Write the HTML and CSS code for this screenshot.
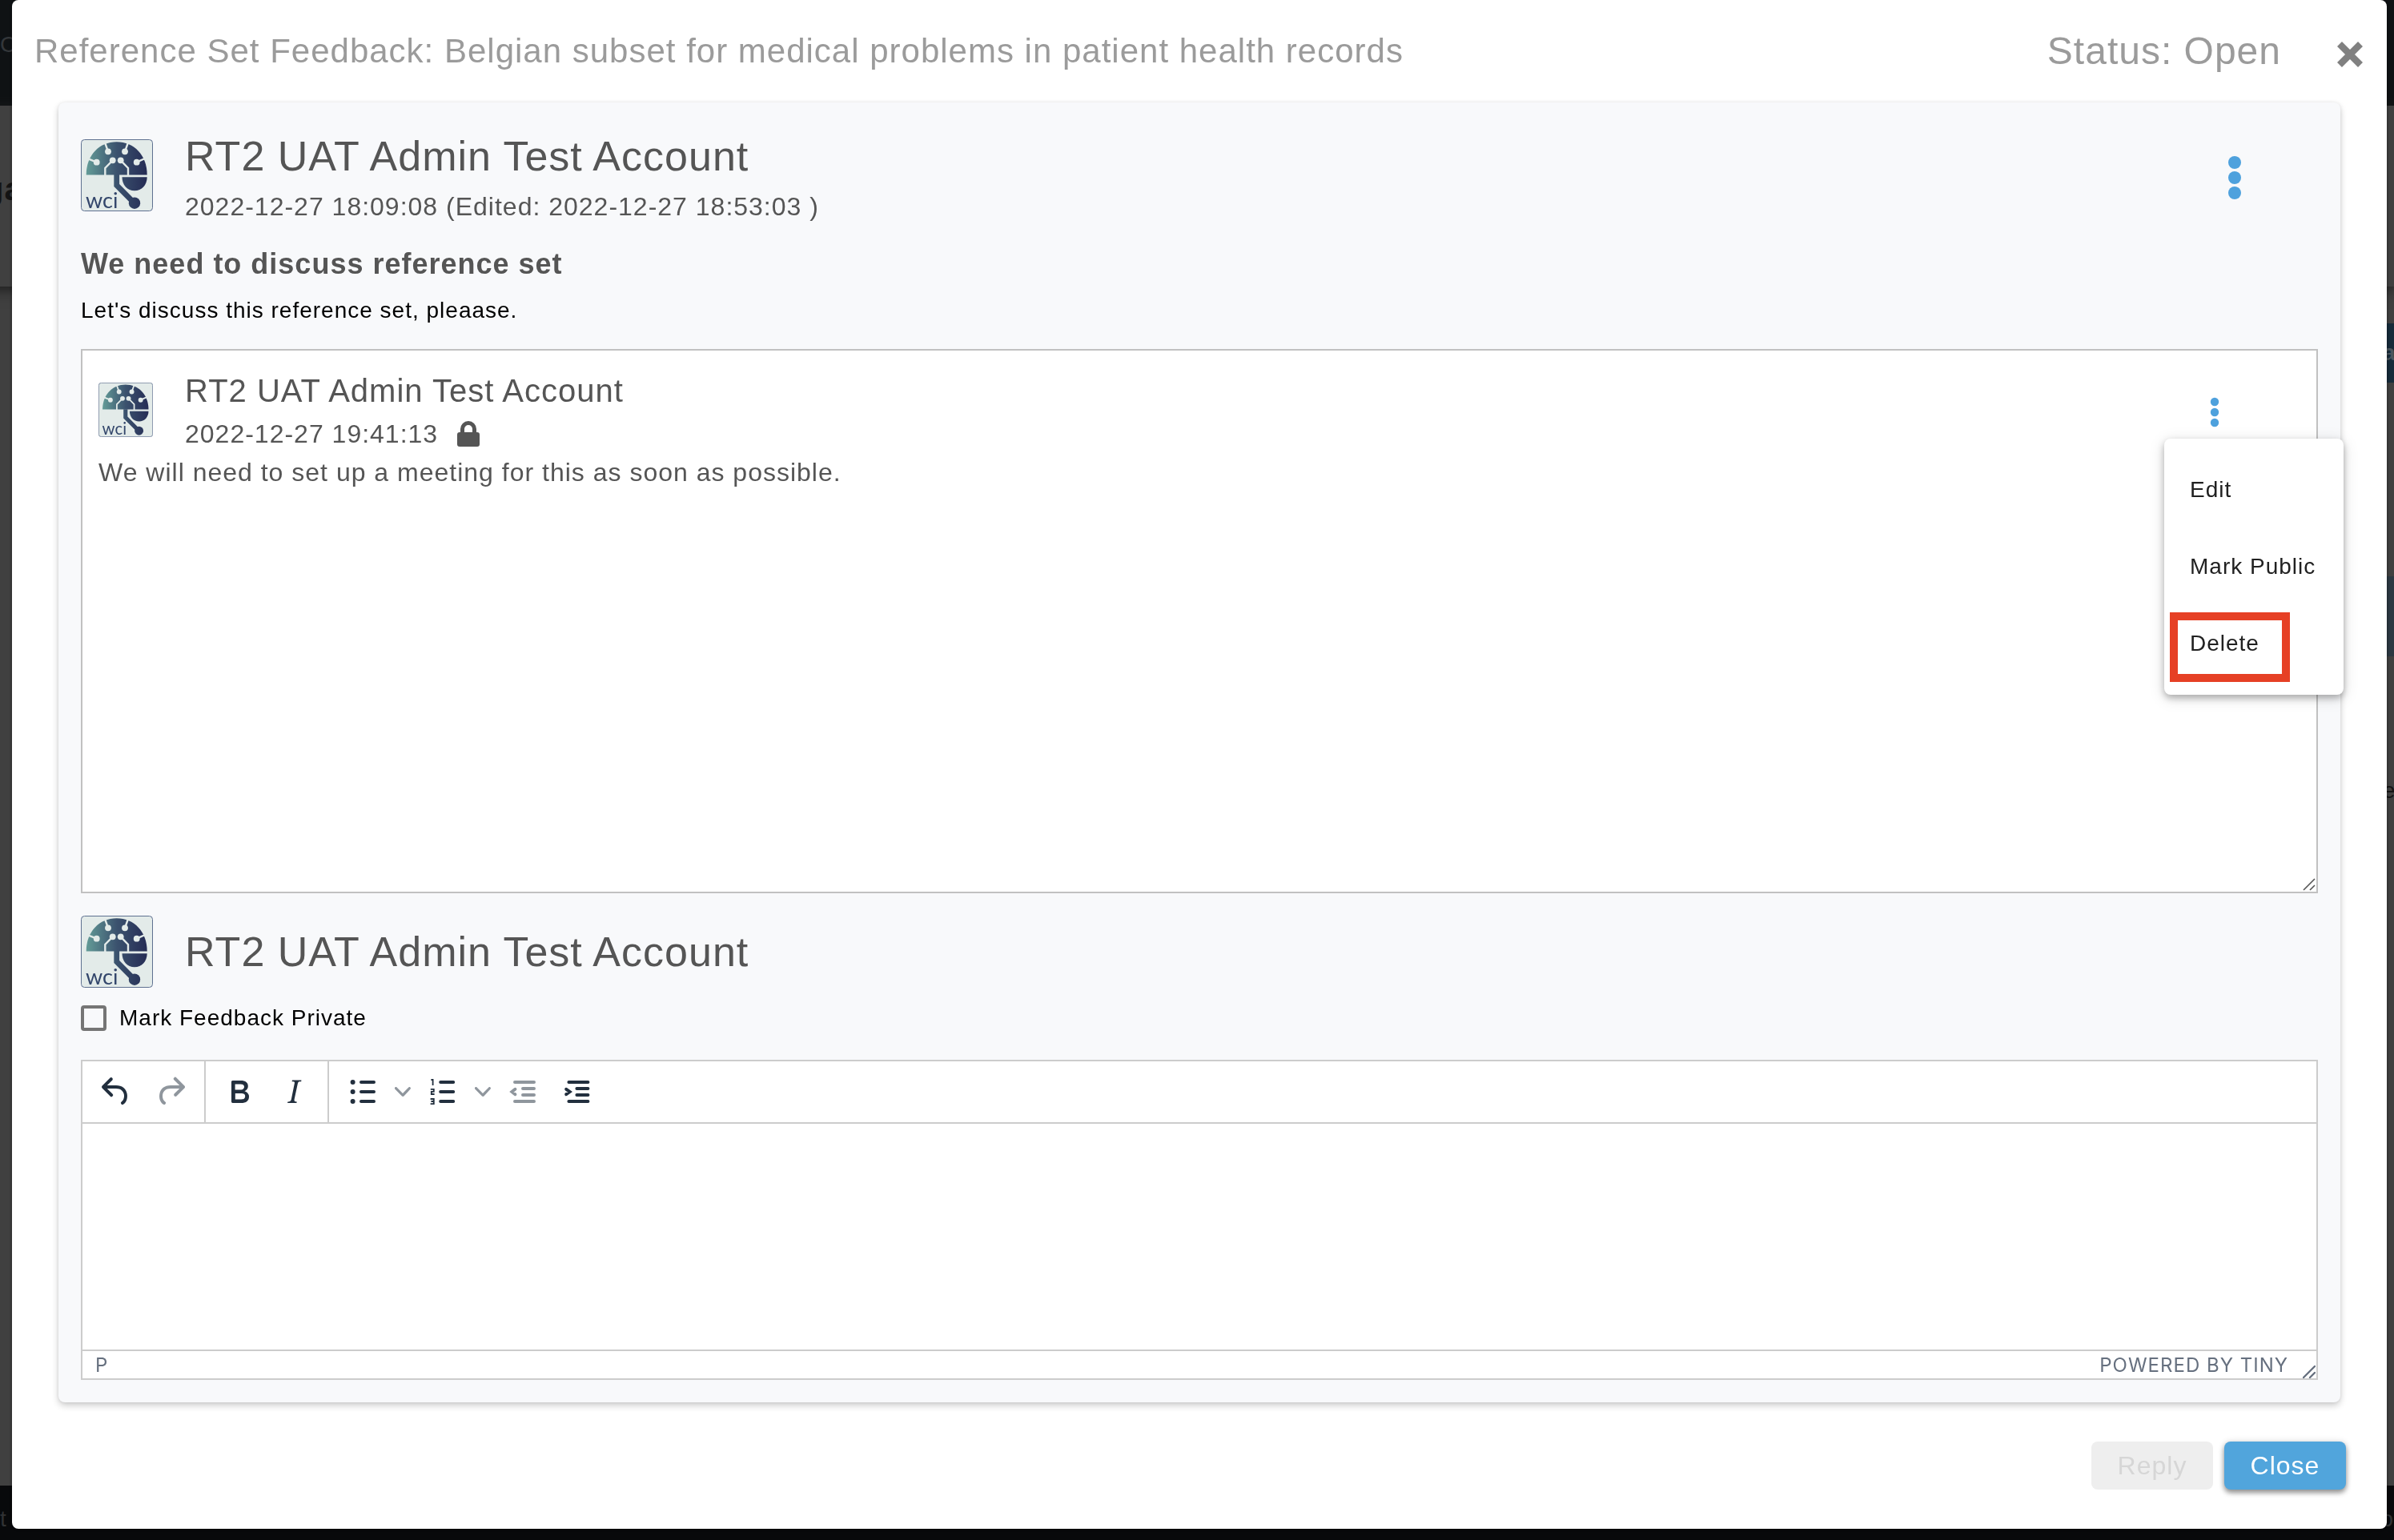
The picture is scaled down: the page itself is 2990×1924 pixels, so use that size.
FILE: index.html
```html
<!DOCTYPE html>
<html lang="en">
<head>
<meta charset="utf-8">
<meta name="viewport" content="width=device-width, initial-scale=1">
<title>Reference Set Feedback</title>
<link rel="stylesheet" href="styles.css">
</head>
<body>
<svg class="defs" aria-hidden="true">
  <defs>
    <linearGradient id="brand" gradientUnits="userSpaceOnUse" x1="7" y1="0" x2="83" y2="0">
      <stop offset="0" stop-color="#639b97"/>
      <stop offset="0.5" stop-color="#3b526e"/>
      <stop offset="1" stop-color="#252c55"/>
    </linearGradient>
    <symbol id="wci" viewBox="0 0 90 90">
      <rect x="0.5" y="0.5" width="89" height="89" rx="4" fill="#e3ebe9" stroke="#5f7190"/>
      <path fill="url(#brand)" d="M6.7 44.5C6.7 20 23 3.3 44.7 3.3S82.7 20 82.7 44.5z"/>
      <g fill="none" stroke="#e3ebe9" stroke-width="2.4">
        <path d="M19.7 28.7L9 24.3M34 15.3L30 4M55 15.3L59 4M69.7 28.7L80 24M39.7 26.3L30.3 36V46M49.7 26.3L59 36V46"/>
      </g>
      <g fill="#e3ebe9">
        <circle cx="19.7" cy="28.7" r="3.9"/><circle cx="34" cy="15.3" r="3.9"/><circle cx="55" cy="15.3" r="3.9"/>
        <circle cx="69.7" cy="28.7" r="3.9"/><circle cx="39.7" cy="26.3" r="3.9"/><circle cx="49.7" cy="26.3" r="3.9"/>
      </g>
      <path fill="url(#brand)" d="M51.5 47.3H82.7C82.7 57 76 64.3 67 64.3S51.5 57 51.5 47.3z"/>
      <path fill="none" stroke="url(#brand)" stroke-width="6.8" d="M44.7 44V57.5L67 80"/>
      <circle cx="67" cy="79.7" r="7.2" fill="url(#brand)"/>
      <text x="6" y="86" class="wci-word">wci</text>
    </symbol>
  </defs>
</svg>

<div class="backdrop" aria-hidden="true">
  <div class="page-nav"><span>C</span></div>
  <div class="page-band"><span>ga</span></div>
  <div class="page-main">
    <div class="page-side">
      <div class="page-button">a</div>
      <div class="page-row"></div>
      <div class="page-pick"></div>
      <div class="page-label">e</div>
    </div>
  </div>
  <div class="page-foot"><span>t</span><span>Co</span></div>
</div>

<section class="dialog" role="dialog" aria-labelledby="dialog-title">
  <header class="dialog-head">
    <h1 id="dialog-title">Reference Set Feedback: Belgian subset for medical problems in patient health records</h1>
    <span class="status">Status: Open</span>
    <button class="close-x" type="button" aria-label="Close dialog">
      <svg viewBox="0 0 40 40"><path d="M7 11L33 37M33 11L7 37" stroke="#808080" stroke-width="8.4"/></svg>
    </button>
  </header>

  <main class="card">
    <article>
      <div class="person">
        <svg class="avatar" role="img" aria-label="WCI"><use href="#wci"/></svg>
        <div class="who">
          <h2>RT2 UAT Admin Test Account</h2>
          <p class="date">2022-12-27 18:09:08 (Edited: 2022-12-27 18:53:03 )</p>
        </div>
        <button class="dots" type="button" aria-label="Feedback options">
          <svg viewBox="0 0 48 66"><g fill="#4ea1dd"><circle cx="24" cy="13" r="8"/><circle cx="24" cy="32" r="8"/><circle cx="24" cy="51" r="8"/></g></svg>
        </button>
      </div>
      <h3>We need to discuss reference set</h3>
      <p class="note">Let's discuss this reference set, pleaase.</p>
    </article>

    <section class="thread">
      <div class="person small">
        <svg class="avatar" role="img" aria-label="WCI"><use href="#wci"/></svg>
        <div class="who">
          <h2>RT2 UAT Admin Test Account</h2>
          <p class="date">2022-12-27 19:41:13
            <svg class="lock" viewBox="0 0 28 32" role="img" aria-label="Private"><path fill="#555" fill-rule="evenodd" d="M4 14V10a10 10 0 0120 0v4h1a3 3 0 013 3v12a3 3 0 01-3 3H3a3 3 0 01-3-3V17a3 3 0 013-3zM9 14h10v-4a5 5 0 00-10 0z"/></svg>
          </p>
        </div>
        <div class="menu-anchor">
          <button class="dots" type="button" aria-label="Reply options" aria-expanded="true">
            <svg viewBox="0 0 48 66"><g fill="#4ea1dd"><circle cx="25" cy="20" r="5.2"/><circle cx="25" cy="33" r="5.2"/><circle cx="25" cy="46" r="5.2"/></g></svg>
          </button>
          <div class="menu">
            <button type="button">Edit</button>
            <button type="button">Mark Public</button>
            <button type="button" class="marked">Delete</button>
          </div>
        </div>
      </div>
      <p class="message">We will need to set up a meeting for this as soon as possible.</p>
      <svg class="grip" viewBox="0 0 16 16" aria-hidden="true"><path d="M1 15L15 1M9 15L15 9" stroke="#555" stroke-width="1.6"/></svg>
    </section>

    <div class="person compose">
      <svg class="avatar" role="img" aria-label="WCI"><use href="#wci"/></svg>
      <h2>RT2 UAT Admin Test Account</h2>
    </div>
    <label class="private"><input type="checkbox">Mark Feedback Private</label>

    <section class="editor">
      <div class="toolbar" role="toolbar">
        <div class="group">
          <button type="button" aria-label="Undo"><svg viewBox="0 0 24 24"><path d="M6.4 8H12c3.7 0 6.2 2 6.8 5.1.6 2.7-.4 5.6-2.3 6.8a1 1 0 01-1-1.8c1.1-.6 1.8-2.7 1.4-4.6-.5-2.1-2.1-3.5-4.9-3.5H6.4l3.3 3.3a1 1 0 11-1.4 1.4l-5-5a1 1 0 010-1.4l5-5a1 1 0 011.4 1.4L6.4 8z"/></svg></button>
          <button type="button" aria-label="Redo" class="off"><svg viewBox="0 0 24 24"><path d="M17.6 10H12c-2.8 0-4.4 1.4-4.9 3.5-.4 2 .3 4 1.4 4.6a1 1 0 11-1 1.8c-2-1.2-2.9-4.1-2.3-6.8.6-3 3-5.1 6.8-5.1h5.6l-3.3-3.3a1 1 0 111.4-1.4l5 5a1 1 0 010 1.4l-5 5a1 1 0 01-1.4-1.4l3.3-3.3z"/></svg></button>
        </div>
        <div class="group">
          <button type="button" aria-label="Bold"><svg viewBox="0 0 24 24"><path fill-rule="evenodd" d="M7.8 19c-.3 0-.5 0-.6-.2l-.2-.5V5.7c0-.2 0-.4.2-.5l.6-.2h5c1.5 0 2.7.3 3.5 1 .7.6 1.1 1.4 1.1 2.5a3 3 0 01-.6 1.9c-.4.6-1 1-1.6 1.2.4.1.9.3 1.3.6s.8.7 1 1.2c.4.4.5 1 .5 1.6 0 1.3-.4 2.3-1.3 3-.8.7-2.1 1-3.8 1H7.8zm5-8.3c.6 0 1.2-.1 1.6-.5.4-.3.6-.7.6-1.3 0-1.1-.8-1.7-2.3-1.7H9.3v3.5h3.4zm.5 6c.7 0 1.3-.1 1.7-.4.4-.4.6-.9.6-1.5s-.2-1-.7-1.4c-.4-.3-1-.4-2-.4H9.4v3.8h4z"/></svg></button>
          <button type="button" aria-label="Italic"><svg viewBox="0 0 24 24"><path d="M16.7 4.7l-.1.9h-.3c-.6 0-1 0-1.4.3-.3.3-.4.6-.5 1.1l-2.1 9.8v.6c0 .5.4.8 1.4.8h.2l-.2.8H8l.2-.8h.2c1.1 0 1.8-.5 2-1.5l2-9.8.1-.5c0-.6-.4-.8-1.4-.8h-.3l.2-.9h5.8z"/></svg></button>
        </div>
        <div class="group lists">
          <button type="button" aria-label="Bullet list"><svg viewBox="0 0 24 24"><path class="line" d="M11 6h8M11 12h8M11 18h8"/><circle cx="5.8" cy="6" r="1.5"/><circle cx="5.8" cy="12" r="1.5"/><circle cx="5.8" cy="18" r="1.5"/></svg></button>
          <button type="button" aria-label="Bullet list styles" class="chevron off"><svg viewBox="0 0 10 10"><path d="M8.7 2.2c.3-.3.8-.3 1 0 .4.4.4.9 0 1.2L5.7 7.8c-.3.3-.9.3-1.2 0L.2 3.4a.8.8 0 010-1.2c.3-.3.8-.3 1.1 0L5 6l3.7-3.8z"/></svg></button>
          <button type="button" aria-label="Numbered list"><svg viewBox="0 0 24 24"><path class="line" d="M10.6 6h8M10.6 12h8M10.6 18h8"/><path class="digits" d="M4.7 4.5h1.1V8M4.4 10.4h2v1.5h-1.5v1.6h1.9M4.3 16.5h2.1v3.1h-2.1M4.7 18h1.6"/></svg></button>
          <button type="button" aria-label="Numbered list styles" class="chevron off"><svg viewBox="0 0 10 10"><path d="M8.7 2.2c.3-.3.8-.3 1 0 .4.4.4.9 0 1.2L5.7 7.8c-.3.3-.9.3-1.2 0L.2 3.4a.8.8 0 010-1.2c.3-.3.8-.3 1.1 0L5 6l3.7-3.8z"/></svg></button>
          <button type="button" aria-label="Decrease indent" class="off"><svg viewBox="0 0 24 24"><path class="line" d="M7 6h12M12 10h7M12 14h7M7 18h12M7.2 10.4L5.2 12l2 1.6"/></svg></button>
          <button type="button" aria-label="Increase indent"><svg viewBox="0 0 24 24"><path class="line" d="M6.7 6h12M11.7 10h7M11.7 14h7M6.7 18h12M5.1 10.4L7.3 12l-2.2 1.6"/></svg></button>
        </div>
      </div>
      <textarea aria-label="Feedback reply" rows="1"></textarea>
      <footer class="statusbar">
        <span>P</span>
        <a href="#tiny">POWERED BY TINY</a>
        <svg class="grip" viewBox="0 0 16 16" aria-hidden="true"><path d="M1 15L15 1M9 15L15 9" stroke="#66707f" stroke-width="2.4" stroke-linecap="round"/></svg>
      </footer>
    </section>
  </main>

  <footer class="actions">
    <button type="button" class="reply" disabled>Reply</button>
    <button type="button" class="close">Close</button>
  </footer>
</section>
</body>
</html>
```
FILE: styles.css
```css
*, *::after { box-sizing: border-box; }

body {
  margin: 0;
  color: #555;
  font-family: "Liberation Sans", Arial, sans-serif;
  font-size: 32px;
  line-height: 48px;
  letter-spacing: 1px;
}

h1, h2, h3, p { margin: 0; font-weight: 400; }

button {
  padding: 0;
  border: 0;
  background: none;
  color: inherit;
  font: inherit;
  letter-spacing: inherit;
}

svg { display: block; }
.defs { position: absolute; width: 0; height: 0; }

/* Dimmed page behind the dialog */
.backdrop {
  position: fixed;
  inset: 0;
  z-index: -1;
  display: flex;
  flex-direction: column;
  overflow: hidden;
  background: #404040;
  color: #141414;
  font-size: 28px;
}
.page-nav { height: 132px; padding-top: 32px; background: #0f1214; color: #34373a; }
.page-band {
  height: 226px;
  margin-left: -20px;
  padding-top: 80px;
  box-shadow: 0 4px 16px #1c1c1c;
  font-size: 40px;
  font-weight: 700;
}
.page-main { flex: 1; display: flex; justify-content: flex-end; }
.page-side { width: 14px; padding-top: 46px; }
.page-button { height: 74px; background: #162b3a; color: #4a565e; line-height: 74px; font-weight: 700; }
.page-row { height: 242px; }
.page-pick { height: 100px; background: #2c3842; }
.page-label { padding-top: 144px; }
.page-foot {
  display: flex;
  justify-content: space-between;
  height: 68px;
  padding-top: 18px;
  overflow: hidden;
  background: #08090b;
  color: #303234;
}

/* Dialog */
.dialog {
  margin: 0 9px 14px 15px;
  border-radius: 8px;
  background: #fff;
  box-shadow: 0 0 2px 2px #0003;
}
.dialog-head {
  display: flex;
  align-items: center;
  height: 128px;
  padding: 0 26px 0 28px;
  color: #9b9b9b;
}
h1 { flex: 1; font-size: 42px; }
.status { font-size: 48px; }
.close-x { width: 40px; height: 40px; margin-left: 66px; }

.card {
  margin: 0 58px;
  padding: 36px 28px 28px;
  border-radius: 8px;
  background: #f8f9fb;
  box-shadow: 0 4px 8px #0003, 0 0 4px #0001;
}

.person { display: flex; align-items: center; gap: 40px; }
.person .avatar { width: 90px; height: 90px; margin-bottom: 8px; }
.person h2 { font-size: 52px; line-height: 62px; }
.who { flex: 1; display: grid; gap: 8px; }
.date { display: flex; align-items: center; gap: 24px; }
.lock { width: 28px; height: 32px; }
.dots { display: block; width: 48px; height: 66px; margin-right: 80px; }
.wci-word { fill: #33466b; font-family: Lato, sans-serif; font-size: 27px; letter-spacing: 0; }

h3 { margin-top: 24px; font-size: 36px; font-weight: 700; }
.note { margin-top: 16px; color: #000; font-size: 28px; line-height: 36px; }

.thread {
  position: relative;
  min-height: 680px;
  margin-top: 30px;
  padding: 26px 24px 26px 20px;
  border: 2px solid #c1c1c1;
  background: #fff;
}
.small .avatar { width: 68px; height: 68px; margin-bottom: 6px; }
.small h2 { font-size: 40px; line-height: 48px; }
.small .who { gap: 6px; }
.thread .grip { position: absolute; right: 1px; bottom: 1px; }
.grip { width: 16px; height: 16px; }

.menu-anchor { position: relative; }
.menu {
  position: absolute;
  top: 100%;
  left: -38px;
  z-index: 2;
  display: grid;
  width: 224px;
  padding: 16px 0;
  border-radius: 8px;
  background: #fff;
  box-shadow: 0 4px 8px #0004, 0 4px 20px #0002;
}
.menu button {
  position: relative;
  height: 96px;
  padding: 0 0 0 32px;
  color: #212121;
  font-size: 28px;
  text-align: left;
  white-space: nowrap;
}
.marked::after {
  content: "";
  position: absolute;
  top: 9px;
  left: 7px;
  width: 150px;
  height: 87px;
  border: 10px solid #e64025;
}

.compose { margin-top: 28px; }
.compose .avatar { margin-bottom: 0; }

.private {
  display: flex;
  align-items: center;
  gap: 16px;
  margin: 20px 0 34px;
  color: #000;
  font-size: 28px;
  line-height: 36px;
}
.private input {
  appearance: none;
  width: 32px;
  height: 32px;
  margin: 0;
  border: 4px solid #757575;
  border-radius: 4px;
}

/* Rich text editor */
.editor { border: 2px solid #ccc; background: #fff; }
.toolbar { display: flex; height: 78px; border-bottom: 2px solid #ccc; }
.group { display: flex; padding: 0 8px; border-right: 2px solid #ccc; }
.lists { border-right: 0; }
.toolbar button { width: 68px; display: grid; place-items: center; fill: #222f3e; stroke: none; }
.toolbar svg { width: 48px; height: 48px; }
.toolbar .off { opacity: 0.5; }
.toolbar .chevron { width: 32px; }
.toolbar .chevron svg { width: 20px; height: 20px; }
.line { fill: none; stroke: #222f3e; stroke-width: 2; stroke-linecap: round; }
.digits { fill: none; stroke: #222f3e; stroke-width: 0.9; }
textarea { display: block; width: 100%; height: 282px; padding: 28px; border: 0; resize: none; outline: 0; font: inherit; }
.statusbar {
  display: flex;
  align-items: center;
  height: 36px;
  padding: 2px 1px 0 16px;
  border-top: 2px solid #ccc;
  color: #66707f;
  font-family: Inter, sans-serif;
  font-size: 24px;
}
.statusbar a { margin-left: auto; color: inherit; text-decoration: none; }
.statusbar .grip { margin-left: 18px; align-self: flex-end; }

.actions { display: flex; justify-content: flex-end; gap: 14px; padding: 49px 51px; }
.actions button { width: 152px; height: 60px; border-radius: 8px; }
.reply { background: #eee; color: #d6d6d6; }
.actions .close { background: #51a5dc; color: #fff; box-shadow: 0 4px 6px #0006, 0 0 8px #0002; }
```
